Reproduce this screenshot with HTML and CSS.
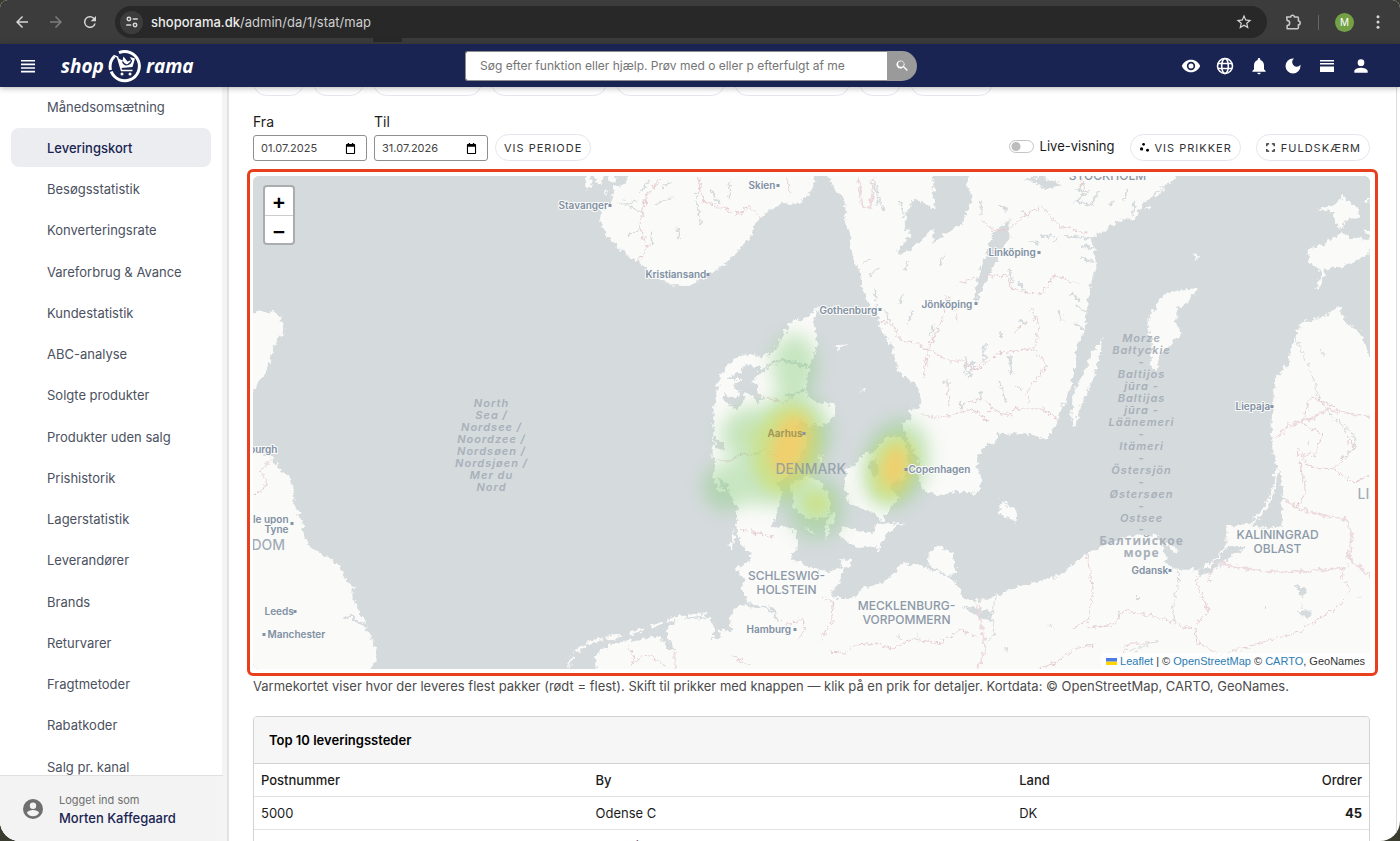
FILE: index.html
```html
<!DOCTYPE html>
<html lang="da">
<head>
<meta charset="utf-8">
<title>Leveringskort</title>
<link rel="stylesheet" href="styles.css">
</head>
<body>
<div class="window">
  <div class="chrome">
    <button class="chrome-btn" aria-label="Tilbage"><svg viewBox="0 0 24 24"><path d="M20 11H7.8l5.6-5.6L12 4l-8 8 8 8 1.4-1.4L7.8 13H20z"/></svg></button>
    <button class="chrome-btn dim" aria-label="Frem"><svg viewBox="0 0 24 24"><path d="M4 11h12.2l-5.6-5.6L12 4l8 8-8 8-1.4-1.4 5.6-5.6H4z"/></svg></button>
    <button class="chrome-btn" aria-label="Genindlæs"><svg viewBox="0 0 24 24"><path d="M17.65 6.35A8 8 0 1 0 19.73 14h-2.08A6 6 0 1 1 12 6c1.66 0 3.14.69 4.22 1.78L13 11h7V4z"/></svg></button>
    <div class="address">
      <span class="site-info"><svg viewBox="0 0 16 16" fill="none" stroke="#d6d6d6" stroke-width="1.7" stroke-linecap="round"><circle cx="4.5" cy="4.5" r="2"/><path d="M9.500 4.500h4.500M2 11.500h4.500"/><circle cx="11.5" cy="11.5" r="2"/></svg></span>
      <span class="url"><b>shoporama.dk</b>/admin/da/1/stat/map</span>
      <svg class="star" viewBox="0 0 24 24"><path d="M22 9.24l-7.19-.62L12 2 9.19 8.63 2 9.24l5.46 4.73L5.82 21 12 17.27 18.18 21l-1.63-7.03L22 9.24zM12 15.4l-3.76 2.27 1-4.28-3.32-2.88 4.38-.38L12 6.1l1.71 4.04 4.38.38-3.32 2.88 1 4.28z"/></svg>
      <span class="tab-stub"></span>
    </div>
    <div class="chrome-end">
      <svg class="puzzle" viewBox="0 0 20 20" fill="none" stroke="#c9c9c9" stroke-width="1.7" stroke-linejoin="round"><path d="M3 4.500h4.500a2 2 0 0 1 4 0H15a1 1 0 0 1 1 1V9a2 2 0 0 1 0 4v3.500a1 1 0 0 1-1 1H3.500V14a2.800 2.800 0 0 0 0-5.600z"/></svg>
      <span class="rule"></span>
      <span class="avatar">M</span>
      <svg class="kebab" viewBox="0 0 24 24"><circle cx="12" cy="5" r="2"/><circle cx="12" cy="12" r="2"/><circle cx="12" cy="19" r="2"/></svg>
    </div>
  </div>

  <header class="topbar">
    <div class="topbar-side">
      <button class="icon-btn menu" aria-label="Menu"><svg viewBox="0 0 20 20"><path d="M3 4h14v1.600H3zM3 7.600h14v1.600H3zM3 11.200h14v1.600H3zM3 14.800h14v1.600H3z"/></svg></button>
      <a class="logo" href="#"><span>shop</span>
        <svg viewBox="0 0 34 34" fill="none" stroke="#fff"><path d="M6.200 7.500A15 15 0 0 0 2.500 21M3.200 22.500A14.600 14.600 0 1 0 11 3.700" stroke-width="3"/><path d="M5.500 6.500 9.500 8l4 13.500h11" stroke-width="1.500"/><path d="M9.500 9l5 2.500 1-4 4 5 4-1.500L22 8l5 1.500-2.500 8.500-11.500 1z" fill="#fff" stroke="none"/><path d="M14.500 12.500q2 4.500 5.500 3t3.500-4.500" stroke="#1a2452" stroke-width="1.300"/><circle cx="14" cy="25" r="1.500" fill="#fff" stroke="none"/><circle cx="22" cy="25" r="1.500" fill="#fff" stroke="none"/></svg>
        <span>rama</span></a>
    </div>
    <form class="search">
      <input type="text" aria-label="Søg" placeholder="Søg efter funktion eller hjælp. Prøv med o eller p efterfulgt af me">
      <button type="button" aria-label="Søg"><svg viewBox="0 0 24 24"><path d="M15.500 14h-.79l-.28-.27A6.500 6.500 0 1 0 13.730 14.710l.27.28v.79l5 4.990L20.490 19zM9.500 14a4.500 4.500 0 1 1 0-9 4.500 4.500 0 0 1 0 9z"/></svg></button>
    </form>
    <div class="topbar-side tools">
      <button class="icon-btn" aria-label="Vis"><svg viewBox="0 0 24 24"><path d="M12 4.500C7 4.500 2.730 7.610 1 12c1.730 4.390 6 7.500 11 7.500s9.270-3.110 11-7.500c-1.730-4.390-6-7.500-11-7.500zM12 17a5 5 0 1 1 0-10 5 5 0 0 1 0 10zm0-8a3 3 0 1 0 0 6 3 3 0 0 0 0-6z"/></svg></button>
      <button class="icon-btn" aria-label="Sprog"><svg viewBox="0 0 24 24" fill="none" stroke="#fff" stroke-width="1.900"><circle cx="12" cy="12" r="9"/><ellipse cx="12" cy="12" rx="4" ry="9"/><path d="M3.500 9h17M3.500 15h17"/></svg></button>
      <button class="icon-btn" aria-label="Notifikationer"><svg viewBox="0 0 24 24"><path d="M12 22c1.100 0 2-.9 2-2h-4a2 2 0 0 0 2 2zm6-6v-5c0-3.070-1.640-5.640-4.500-6.320V4a1.500 1.500 0 0 0-3 0v.68C7.630 5.360 6 7.920 6 11v5l-2 2v1h16v-1z"/></svg></button>
      <button class="icon-btn" aria-label="Mørkt tema"><svg viewBox="0 0 24 24"><path d="M12 3a9 9 0 1 0 9 9c0-.46-.04-.92-.1-1.360A5.390 5.390 0 0 1 16.500 12.900 5.400 5.400 0 0 1 13.360 3.100 9 9 0 0 0 12 3z"/></svg></button>
      <button class="icon-btn" aria-label="Visning"><svg viewBox="0 0 20 20"><path d="M3 4h14v1.500H3zM3 7h14v1.500H3zM3 10.500h14V16H3z"/></svg></button>
      <button class="icon-btn" aria-label="Profil"><svg viewBox="0 0 24 24"><path d="M12 12a4 4 0 1 0 0-8 4 4 0 0 0 0 8zm0 2c-2.670 0-8 1.340-8 4v2h16v-2c0-2.660-5.330-4-8-4z"/></svg></button>
    </div>
  </header>

  <div class="body">
    <aside class="sidebar">
      <nav>
        <a href="#">Månedsomsætning</a>
        <a href="#" class="active">Leveringskort</a>
        <a href="#">Besøgsstatistik</a>
        <a href="#">Konverteringsrate</a>
        <a href="#">Vareforbrug &amp; Avance</a>
        <a href="#">Kundestatistik</a>
        <a href="#">ABC-analyse</a>
        <a href="#">Solgte produkter</a>
        <a href="#">Produkter uden salg</a>
        <a href="#">Prishistorik</a>
        <a href="#">Lagerstatistik</a>
        <a href="#">Leverandører</a>
        <a href="#">Brands</a>
        <a href="#">Returvarer</a>
        <a href="#">Fragtmetoder</a>
        <a href="#">Rabatkoder</a>
        <a href="#">Salg pr. kanal</a>
      </nav>
      <div class="account">
        <svg viewBox="0 0 24 24"><path d="M12 2a10 10 0 1 0 0 20 10 10 0 0 0 0-20zm0 3.500a3.200 3.200 0 1 1 0 6.400 3.200 3.200 0 0 1 0-6.400zm0 13.700a7.200 7.200 0 0 1-6-3.220c.03-1.990 4-3.080 6-3.080s5.970 1.090 6 3.080a7.200 7.200 0 0 1-6 3.220z"/></svg>
        <div><small>Logget ind som</small><strong>Morten Kaffegaard</strong></div>
      </div>
    </aside>

    <main class="content">
      <div class="chips" aria-hidden="true"><i class="s"></i><i class="s"></i><i class="l"></i><i class="xl"></i><i class="l"></i><i class="xl"></i><i class="xs"></i><i class="m"></i></div>

      <div class="filters">
        <div class="field">
          <label for="from">Fra</label>
          <span class="date"><input id="from" type="text" value="01.07.2025"><svg viewBox="0 0 12 12"><path d="M2 1h1V0h1.500v1h3V0H9v1h1a1 1 0 0 1 1 1v9a1 1 0 0 1-1 1H2a1 1 0 0 1-1-1V2a1 1 0 0 1 1-1zm.2 3.200v6.600h7.600V4.200z"/></svg></span>
        </div>
        <div class="field">
          <label for="to">Til</label>
          <span class="date"><input id="to" type="text" value="31.07.2026"><svg viewBox="0 0 12 12"><path d="M2 1h1V0h1.500v1h3V0H9v1h1a1 1 0 0 1 1 1v9a1 1 0 0 1-1 1H2a1 1 0 0 1-1-1V2a1 1 0 0 1 1-1zm.2 3.200v6.600h7.600V4.200z"/></svg></span>
        </div>
        <button class="pill">VIS PERIODE</button>
        <label class="live"><input type="checkbox" class="switch">Live-visning</label>
        <button class="pill"><svg viewBox="0 0 12 12"><circle cx="5" cy="2.500" r="1.500"/><circle cx="2.800" cy="7.500" r="1.800"/><circle cx="9.300" cy="9" r="1.600"/></svg>VIS PRIKKER</button>
        <button class="pill full"><svg viewBox="0 0 12 12" fill="none" stroke="#222" stroke-width="1.400"><path d="M2 4.500V2h2.500M7.500 2H10v2.500M10 7.500V10H7.500M4.500 10H2V7.500"/></svg>FULDSKÆRM</button>
      </div>

      <div class="map-wrap">
        <div class="map">
          <svg class="map-art" viewBox="253 175 1118 493" preserveAspectRatio="xMidYMid slice">
            <defs>
              <filter id="coast" x="253" y="175" width="1118" height="493" filterUnits="userSpaceOnUse"><feTurbulence type="fractalNoise" baseFrequency="0.22" numOctaves="3" seed="4" result="n"/><feDisplacementMap in="SourceGraphic" in2="n" scale="8" xChannelSelector="R" yChannelSelector="G"/></filter>
              <filter id="soft9" x="-40%" y="-40%" width="180%" height="180%"><feGaussianBlur stdDeviation="9"/></filter>
              <filter id="soft7" x="-40%" y="-40%" width="180%" height="180%"><feGaussianBlur stdDeviation="7"/></filter>
            </defs>
            <rect x="253" y="175" width="1118" height="493" fill="#d5dadd"/>
            <g filter="url(#coast)">
              <g fill="#fafaf8">
                <path d="M240 312L262 311 272 310 280 314 285 326 284 332 277 341 272 352 271 360 266 370 262 378 257 382 254 390 250 400H240z"/>
                <path d="M240 446L262 452 272 456 280 468 285 473 291 476 293 488 294 500 298 510 303 522 304 533 311 547 323 553 334 560 341 566 345 577 352 584 358 586 353 588 353 598 360 610 368 624 368 630 374 642 377 651 377 660 366 672H240z"/>
                <path d="M632 170L625 183 615 190 612 200 603 208 601 222 606 232 611 239 620 248 630 256 640 262 648 268 655 274 665 280 670 284 688 285 700 280 712 272 725 264 735 254 748 240 757 221 768 211 783 202 789 204 797 203 805 198 813 190 817 170z"/>
                <path d="M586 172h5v14l-4 3zM595 172h10l-3 11-6-2zM608 176l7-3 3 5-6 4zM614 185l5-2 1 5-6 3zM605 188l4 1-2 5z"/>
                <path d="M827 165L833 188 843 195 846 208 845 218 850 230 852 245 853 256 860 270 862 285 867 300 873 308 878 316 880 325 888 338 893 345 897 365 903 375 913 380 920 389 922 402 918 407 909 410 912 418 902 422 907 437 918 457 920 477 923 490 943 494 957 490 977 492 983 480 978 467 978 455 988 443 998 441 997 433 1027 432 1047 438 1058 420 1063 405 1070 392 1075 372 1077 348 1085 328 1088 305 1090 285 1097 265 1093 237 1107 228 1123 218 1137 217 1143 202 1160 188 1176 176 1176 165z"/>
                <path d="M820 307L812 312 803 318 792 320 785 332 775 349 763 356 750 353 737 356 727 365 720 377 716 395 714 410 714 420 713 455 716 462 713 477 720 490 730 495 738 507 737 527 740 540 750 553 752 560 735 568 745 577 742 587 750 603 740 604 733 610 730 617 732 631 720 628 722 637 713 637 715 627 710 617 680 618 670 625 667 635 673 642 675 648 667 647 660 635 630 640 613 642 597 653 595 675H1380V357H1370L1363 335 1343 317 1341 305 1320 317 1303 320 1293 342 1288 365 1275 378 1272 420 1273 447 1277 467 1275 487 1267 507 1250 523 1237 524 1227 525 1227 543 1217 557 1200 568 1180 569 1167 563 1165 548 1157 535 1140 533 1123 537 1103 545 1087 553 1073 563 1060 575 1020 585 997 595 980 600 963 597 957 583 950 577 935 570 923 565 903 562 887 580 863 587 853 597 837 597 830 592 842 580 843 567 827 570 807 565 790 557 797 550 797 530 785 525 772 527 777 515 780 500 783 490 777 483 785 478 795 465 800 455 806 445 808 432 813 422 819 426 828 422 836 412 835 403 817 402 808 395 807 380 812 360 818 345 814 320z"/>
                <path d="M790 483L807 475 820 480 830 493 830 513 820 518 807 517 793 505zM837 510L832 523 826 540 826 525 832 512zM806 524l9 9-6-2zM847 467L855 466 863 453 873 453 887 437 900 435 907 443 908 467 905 477 893 480 892 488 900 497 890 507 883 520 873 512 850 503 845 487zM840 535L843 525 860 530 873 533 877 523 905 522 890 530 883 540 879 552 877 545 860 548zM840 558l12 1-1 7-9-1zM928 563l2-12 9-7 5 5 9 3 4 20-8 2-9-3z"/>
                <path d="M835 345l13-4-6 6-4 1zM862 387l4 2-4 1zM820 452l3 5-3 6zM1002 499L1018 511 1017 521 999 513zM1103 337L1101 352 1092 382 1080 408 1075 428 1072 415 1073 395 1083 375 1093 352zM1200 287L1190 298 1177 310 1177 325 1182 332 1173 342 1160 355 1157 370 1150 365 1153 345 1147 322 1160 298 1173 290 1190 289zM1194 253l6 2-3 4zM1343 195L1360 208 1360 217 1347 218 1342 228 1335 222 1333 212 1318 208 1333 205zM1308 248L1327 242 1340 233 1353 237 1375 238 1367 255 1343 265 1327 268 1320 288 1317 285 1323 270 1310 262zM1365 198h10v8zM1363 230h10v6z"/>
                <path d="M733 528l4 8-3 7M728 540l7 3-3 6z"/>
              </g>
              <g fill="none" stroke="#fafaf8" stroke-width="3" stroke-linecap="round">
                <path d="M569 666l4-9M577 650l8-5M588 642l14-4M608 637l14-2M630 632l12-3M652 626l10-3M668 620l16-4M690 615l16-2M1250 525Q1276 500 1277 470M1168 543l9 8"/>
                <path d="M1145 195l7-5M1156 196l8-9M1147 208l4-2M1132 219l3-6M1168 182l6-4" stroke-width="2"/>
              </g>
              <g fill="#d5dadd">
                <path d="M933 170L936 208 915 197 907 212 905 228 912 233 897 252 905 253 918 243 933 228 933 243 947 232 963 222 970 208 973 195 967 185 972 170z"/>
                <path d="M1010 218L993 232 987 252 980 272 975 292 977 302 983 288 993 268 1000 252 1010 235zM1025 178l18-3 6 5 14 2-14 7-12-6z"/>
                <path d="M1279 467L1284 487 1282 502 1283 525 1267 527 1253 524 1268 507 1276 487zM1229 545L1247 545 1229 557 1217 568 1200 575 1197 570 1209 566 1219 557zM962 605L993 610 993 620 980 617z"/>
                <path d="M728 378l6-5 8-1 1-8 17 2-2 10-7 4 8 6-3 8 9 3-6 5-6-8-8-3-2 14-6 3-10-6-4-10 12 6 7-6-8-6 9-8zM736 383l7-6 3 3-4 6zM714 434l9 8 2 8-9-3zM795 425l10-6 5 10-6 6zM793 460l7-3-2 4zM868 466l8-9 5 14-6 5zM717 476l10 6 6 18-10-12z"/>
              </g>
              <g fill="none" stroke="#d5dadd" stroke-width="1.500">
                <path d="M757 374Q772 362 780 360T808 366M786 395q14-2 22-7M745 604q15 2 25 3l10 13M344 617l7-2 9 8 8 1" stroke-width="2.500"/>
                <path d="M711 188l10 16M730 180v20M697 192l2 22 2 10M652 178l-12 14M672 196l-16 8M638 200l-20 2M645 213l-20-10M677 226l3 12M652 232v14M628 235l12-7M662 186l10-5M870 180l8 12 6 18M878 185v20M900 200l4 16M864 262l8-3M870 275l10-8M876 288v14M872 310l6-6M886 310l4 10"/>
                <path d="M940 266l4-12M900 302l3-9M905 270l3-10M914 310l-6 12M930 335l4-12M966 355v18M972 362l-2 16M945 380l4 4M960 400l3 8M998 205l10 4M982 200v16M1022 210l8 6M1042 234l12 2M1053 242l6-5M1020 282l8 12M1066 235l32 4M1010 268l3 14M1060 310l2 10M1020 320l8 2M1000 330l2 8M985 344v18M973 360l4 8M1000 380l6 20M1010 355l2 20M982 390l-2 10M1018 385l3 4M1086 182l-8 6 10 4-12 8 14 4M1100 190l-8 14M1110 205l5-5M1135 200l-2 14M1128 190l-4 10M1030 240l10 3M1080 300l-8-9M1088 312l-12-8M1086 330l-10-7M1096 248l-14-4M1095 260l-14-3" stroke-width="2"/>
                <path d="M1301 603l10 10M1305 598l-4-6M1322 350l2 6M1309 440l1 4M1138 596v4M1120 610v6M1265 604v3M1006 645l2 8M1050 625l4 2M1362 594l-4 4M920 632l-6 8M902 640l-4-6M1160 640l-30 10M1176 625l-3-20 6-22v-14M997 595l-6 20 4 18-8 8M1295 335q18 34 24 62l16 22q24 10 20 26l-14 16" stroke-width="1"/>
                <path d="M1296 585l8 4-4 4 6-2M1303 612h8l-3 3z" stroke-width="3"/>
              </g>
              <g fill="none" stroke="#e6ccd2" stroke-width="1">
                <path d="M660 178l-14 18-6 30 8 20-14 20M698 176l6 24 16 6 22 8 6-10 14 14M787 178l4 16M253 494l12-6 2-8-6-10 12-12M715 460h16l12-8 12 2 10-6 14 8M757 394l16 4 10 4 12-8"/>
                <path d="M880 321l14 2 6 16 16 3 20 10 14 8 16 0 6 8 14-10M922 413l10 4 20-3 20-6 16 12M957 320l-2-14-8-12-4 24-14 30-6 30M948 378l2 32M960 405l22-8 20 16 20-6 20 0 16 12M982 218l10 10 16 2 14-14 20-10 20 20 26 6M1080 176l6 14M960 282l20-6 28-2 4 14 28 6 16-20 24 10M1032 308l8 20-6 20-36 4-20 18-12-6M1034 348l14 16-18 22-2 18M982 420l10-12 22 8M1015 330l14-10"/>
                <path d="M740 529l20 3 14 4M824 596l10 6-2 20-12 18M785 625l10-4 8-4 2 10-6 12M830 650l16 2 10-8 24-2 12 6 20-10 30 4 18-14 20 8M733 655l18 10M628 645l6 8-2 10 14-10 20 12M1087 553l4 16 2 26-4 24-14 8M1089 627l26-4 10-14 28 6 24 6M1175 624l20 4 4 14 20 12M1197 575l4 18 8 16-12 14M1103 668l20-14 6-12 28 0M1217 655l40-12 42-12 40-26 12-16-10-12 8-14M1295 455l20-2 8-20-20-10 6-24 6-4M1315 398l20 8M1340 418l14 30-20 20-24-2-14-20M1335 468l20 14 16-8M1040 668l20-8 14-12 20-4M1299 460l8 30-10 18M1215 560l-6 20"/>
                <path d="M1277 436l14-12 24-8 12-8 40 8 8-2M1285 497l12 10 30 8 18 2 8 16-4 24 22 18M1219 562l40 8 36 1 50-4M978 602l4 26 4 20-8 20M675 650v22M859 176l4 30 8 0 4-30" stroke="#ecdade" stroke-width="2"/>
              </g>
            </g>
            <g filter="url(#soft9)" fill="#86cc7b" opacity=".44">
              <ellipse cx="795" cy="365" rx="23" ry="32"/><ellipse cx="755" cy="434" rx="34" ry="29"/><ellipse cx="794" cy="432" rx="38" ry="42"/><ellipse cx="770" cy="475" rx="40" ry="30"/><circle cx="727" cy="486" r="24"/><ellipse cx="817" cy="507" rx="28" ry="31"/><ellipse cx="896" cy="463" rx="33" ry="46" transform="rotate(18 896 463)"/>
            </g>
            <g filter="url(#soft7)" fill="#d1de4d" opacity=".46">
              <ellipse cx="787" cy="448" rx="33" ry="46" transform="rotate(14 787 448)"/><circle cx="817" cy="502" r="13"/><ellipse cx="757" cy="435" rx="16" ry="12" opacity=".4"/><ellipse cx="894" cy="467" rx="23" ry="34" transform="rotate(18 894 467)"/>
            </g>
            <g filter="url(#soft7)" fill="#ffc862" opacity=".72">
              <ellipse cx="790" cy="444" rx="17" ry="32" transform="rotate(16 790 444)"/><ellipse cx="895" cy="466" rx="12" ry="21" transform="rotate(12 895 466)"/>
            </g>
            <g class="city">
              <text x="559" y="208">Stavanger</text><text x="749" y="188">Skien</text><text x="646" y="277">Kristiansand</text><text x="820" y="313">Gothenburg</text><text x="922" y="307">Jönköping</text><text x="989" y="255">Linköping</text><text x="909" y="472">Copenhagen</text><text x="1236" y="409">Liepaja</text><text x="1132" y="573">Gdansk</text><text x="747" y="632">Hamburg</text><text x="265" y="614">Leeds</text><text x="268" y="637">Manchester</text><text x="278" y="452" text-anchor="end">burgh</text><text x="289" y="522" text-anchor="end">le upon</text><text x="289" y="532" text-anchor="end">Tyne</text>
              <text x="768" y="436" class="warm">Aarhus</text>
            </g>
            <path fill="#8394a6" d="M609 203h3v3h-3zM777 183h3v3h-3zM707 272h3v3h-3zM879 307h3v3h-3zM975 301h3v3h-3zM1038 250h3v3h-3zM905 467h3v3h-3zM1271 404h3v3h-3zM1169 568h3v3h-3zM794 627h3v3h-3zM294 609h3v3h-3zM263 632h3v3h-3zM291 521h3v3h-3zM803 431h3v3h-3z"/>
            <g class="region">
              <text x="787" y="579">SCHLESWIG-</text><text x="787" y="593">HOLSTEIN</text><text x="907" y="609">MECKLENBURG-</text><text x="907" y="623">VORPOMMERN</text><text x="1278" y="538">KALININGRAD</text><text x="1278" y="552">OBLAST</text><text x="1108" y="179">STOCKHOLM</text>
            </g>
            <g class="country"><text x="776" y="473">DENMARK</text><text x="252" y="549">DOM</text><text x="1358" y="498">LIT</text></g>
            <g class="sea">
              <text x="492" y="406">North</text><text x="492" y="418">Sea /</text><text x="492" y="430">Nordsee /</text><text x="492" y="442">Noordzee /</text><text x="492" y="454">Nordsøen /</text><text x="492" y="466">Nordsjøen /</text><text x="492" y="478">Mer du</text><text x="492" y="490">Nord</text>
              <text x="1142" y="341">Morze</text><text x="1142" y="353">Bałtyckie</text><text x="1142" y="365">-</text><text x="1142" y="377">Baltijos</text><text x="1142" y="389">jūra -</text><text x="1142" y="401">Baltijas</text><text x="1142" y="413">jūra -</text><text x="1142" y="425">Läänemeri</text><text x="1142" y="437">-</text><text x="1142" y="449">Itämeri</text><text x="1142" y="461">-</text><text x="1142" y="473">Östersjön</text><text x="1142" y="485">-</text><text x="1142" y="497">Østersøen</text><text x="1142" y="509">-</text><text x="1142" y="521">Ostsee</text><text x="1142" y="532">-</text><text x="1142" y="544" class="cyr">Балтийское</text><text x="1142" y="556" class="cyr">море</text>
            </g>
          </svg>
          <div class="zoom"><button aria-label="Zoom ind">+</button><button aria-label="Zoom ud">−</button></div>
          <div class="credit"><svg viewBox="0 0 12 8"><path fill="#4c7be1" d="M0 0h12v4H0z"/><path fill="#ffd500" d="M0 4h12v4H0z"/></svg> <a href="#">Leaflet</a> | © <a href="#">OpenStreetMap</a> © <a href="#">CARTO</a>, GeoNames</div>
        </div>
        <div class="highlight"></div>
      </div>
      <p class="note">Varmekortet viser hvor der leveres flest pakker (rødt = flest). Skift til prikker med knappen — klik på en prik for detaljer. Kortdata: © OpenStreetMap, CARTO, GeoNames.</p>

      <section class="card">
        <h2>Top 10 leveringssteder</h2>
        <table>
          <colgroup><col class="c-zip"><col class="c-city"><col><col></colgroup>
          <thead><tr><th>Postnummer</th><th>By</th><th>Land</th><th class="num">Ordrer</th></tr></thead>
          <tbody>
            <tr><td>5000</td><td>Odense C</td><td>DK</td><td class="num">45</td></tr>
            <tr><td>1850</td><td>Frederiksberg C</td><td>DK</td><td class="num">38</td></tr>
          </tbody>
        </table>
      </section>
    </main>
  </div>
</div>
</body>
</html>
```
FILE: styles.css
```css
* { box-sizing: border-box; }
body { margin: 0; background: #3b3c30; font-family: Inter, "Liberation Sans", sans-serif; color: #1c1c1c; font-size: 13px; }
button, input { font: inherit; color: inherit; }
button { border: 0; background: none; padding: 0; cursor: pointer; }
a { text-decoration: none; color: inherit; }
svg { display: block; }

.window { height: 100vh; display: flex; flex-direction: column; overflow: hidden; background: #fff; border-radius: 8px 8px 20px 20px; }

/* Browser toolbar */
.chrome { flex: none; height: 44px; display: flex; align-items: center; background: #3c3c3c; padding: 0 13px; }
.chrome-btn { width: 18px; margin-right: 16px; }
.chrome-btn svg { width: 18px; fill: #d6d6d6; }
.chrome-btn.dim svg { fill: #7d7d7d; }
.address { position: relative; flex: 1; height: 32px; display: flex; align-items: center; gap: 8px; border-radius: 16px; background: #282828; padding: 0 14px 0 5px; }
.site-info { width: 23px; height: 23px; border-radius: 50%; background: #3c3c3c; display: grid; place-items: center; }
.site-info svg { width: 14px; }
.url { flex: 1; color: #cfcfcf; font-size: 13px; }
.url b { font-weight: 500; color: #ececec; }
.star { width: 18px; fill: #d6d6d6; }
.tab-stub { position: absolute; left: 258px; top: 32px; width: 29px; height: 4px; background: #282828; }
.chrome-end { display: flex; align-items: center; margin-left: 17px; }
.puzzle { width: 18px; }
.rule { width: 1px; height: 15px; background: #666; margin: 0 16px; }
.avatar { width: 19px; height: 19px; border-radius: 50%; background: #74a046; color: #fff; font-size: 10px; display: grid; place-items: center; margin-right: 15px; }
.kebab { width: 18px; fill: #d6d6d6; }

/* App header */
.topbar { position: relative; z-index: 3; flex: none; height: 43px; display: flex; align-items: center; background: #1a2452; padding: 0 29px 0 11px; box-shadow: 0 1px 6px rgba(0, 0, 0, .3); }
.topbar-side { flex: 1; display: flex; align-items: center; }
.tools { justify-content: flex-end; gap: 14px; }
.icon-btn svg { width: 20px; height: 20px; fill: #fff; }
.tools .icon-btn:nth-child(2) svg { fill: none; }
.menu { padding: 0 7px; margin-right: 16px; }
.logo { display: flex; align-items: center; gap: 4px; color: #fff; font: italic 700 19px/24px "Open Sans", sans-serif; }
.logo svg { width: 34px; }
.search { display: flex; width: 452px; height: 30px; }
.search input { flex: 1; min-width: 0; border: 1px solid #8e8e8e; border-right: 0; border-radius: 3px 0 0 3px; background: #fff; padding: 0 4px 0 14px; font-size: 12px; outline: 0; }
.search input::placeholder { color: #757575; }
.search button { width: 30px; background: #9a9a9a; border-radius: 0 15px 15px 0; display: grid; place-items: center; }
.search svg { width: 15px; fill: #fff; }

/* Sidebar */
.body { flex: 1; min-height: 0; display: flex; }
.sidebar { flex: none; width: 229px; display: flex; flex-direction: column; border-right: 2px solid #e2e2e2; background: linear-gradient(90deg, #fff 222px, #f4f4f4 222px); }
.sidebar nav { flex: 1; min-height: 0; display: flex; flex-direction: column; justify-content: space-between; margin-bottom: -11px; padding: 0 16px 0 11px; }
.sidebar nav a { height: 39px; flex: none; display: flex; align-items: center; padding-left: 36px; border-radius: 8px; color: #4b5160; font-size: 13px; }
.sidebar nav a.active { background: #ebedf1; color: #1a2452; font-weight: 500; }
.account { position: relative; width: 223px; height: 66px; display: flex; align-items: center; gap: 14px; padding-left: 21px; background: #f3f3f3; border-top: 1px solid #e0e0e0; }
.account svg { width: 24px; fill: #6f6f6f; }
.account small { display: block; font-size: 11px; line-height: 18px; color: #6f6f6f; }
.account strong { display: block; font-size: 13px; line-height: 18px; font-weight: 500; color: #1a2452; }

/* Content */
.content { flex: 1; min-width: 0; overflow: hidden; padding: 0 26px 0 24px; margin-right: 3px; border-right: 1px solid #dcdcdc; }
.chips { display: flex; gap: 9px; margin-top: -18px; }
.chips i { height: 27px; border: 1px solid #e4e5ee; border-radius: 14px; }
.chips .xs { width: 42px; }
.chips .s { width: 51px; }
.chips .m { width: 83px; }
.chips .l { width: 109px; }
.chips .xl { width: 116px; }
.filters { display: flex; align-items: flex-end; gap: 7px; margin-top: 17px; }
.field label { display: block; font-size: 14px; line-height: 18px; margin-bottom: 4px; }
.date { display: flex; align-items: center; width: 114px; height: 26px; border: 1px solid #8f8f8f; border-radius: 3px; padding: 0 10px 0 7px; }
.date input { flex: 1; min-width: 0; border: 0; padding: 0; background: none; font-size: 11px; color: #444; outline: 0; }
.date svg { width: 11px; }
.pill { height: 27px; display: flex; align-items: center; gap: 5px; border: 1px solid #e4e5ee; border-radius: 14px; background: #fff; padding: 0 8px; font-size: 11px; letter-spacing: 1px; color: #333; }
.pill svg { width: 11px; }
.live { margin-left: auto; height: 30px; display: flex; align-items: center; gap: 6px; font-size: 13px; margin-right: 8px; }
.pill.full { margin-left: 8px; }
.switch { appearance: none; width: 25px; height: 13px; margin: 0; border: 1px solid #c4c4c4; border-radius: 7px; background: radial-gradient(circle at 6px 50%, #bdbdbd 4px, #fff 5px); }

.map-wrap { position: relative; margin-top: 15px; }
.map { position: relative; height: 493px; border-radius: 6px; overflow: hidden; background: #d5dadd; }
.map-art { width: 100%; height: 100%; }
.highlight { position: absolute; inset: -7px -8px -7px -6px; border: 3px solid #e8401f; border-radius: 6px; pointer-events: none; }
.map-art text { font-family: Inter, sans-serif; }
.city { font-size: 10px; font-weight: 600; fill: #8090a3; stroke: #fafaf8; stroke-width: 2px; paint-order: stroke; }
.city .warm { fill: #9c9556; stroke: none; }
.region { font-size: 12px; font-weight: 500; fill: #8c99a8; stroke: #fafaf8; stroke-width: 1px; paint-order: stroke; text-anchor: middle; }
.country { font-size: 14px; font-weight: 500; fill: #8492a0; fill-opacity: .75; }
.sea { font-size: 11px; font-weight: 600; font-style: italic; fill: #a8b0b9; text-anchor: middle; letter-spacing: 1px; }
.map-art .cyr { font-family: "Open Sans", sans-serif; font-size: 12px; font-style: normal; font-weight: 700; }
.zoom { position: absolute; left: 10px; top: 9px; width: 32px; border: 2px solid #a9adaf; border-radius: 4px; background: #fff; overflow: hidden; }
.zoom button { display: block; width: 100%; height: 28px; font: 700 21px/32px "Liberation Sans", sans-serif; color: #000; }
.zoom button + button { border-top: 1px solid #ccc; }
.credit { position: absolute; right: 0; bottom: 0; padding: 0 5px; background: rgba(255, 255, 255, .8); color: #333; font: 11px/16px "Liberation Sans", sans-serif; white-space: nowrap; }
.credit svg { width: 11px; display: inline; }
.credit a { color: #2b7cb3; }
.note { margin: 7px 0 0; font-size: 13px; line-height: 20px; color: #4c4c4c; white-space: nowrap; }

.card { margin-top: 20px; border: 1px solid #d2d2d2; border-radius: 4px; overflow: hidden; }
.card h2 { margin: 0; height: 47px; padding-left: 15px; font-size: 13px; line-height: 47px; font-weight: 600; color: #000; background: #f6f6f6; border-bottom: 1px solid #d2d2d2; }
.card table { width: 100%; table-layout: fixed; border-collapse: separate; border-spacing: 0; }
.c-zip { width: 30%; }
.c-city { width: 38%; }
.card th, .card td { height: 33px; padding: 0 7px; text-align: left; font-size: 13px; border-bottom: 1px solid #e2e2e2; }
.card th { font-weight: 500; }
.card .num { text-align: right; }
.card td.num { font-weight: 700; }
```
